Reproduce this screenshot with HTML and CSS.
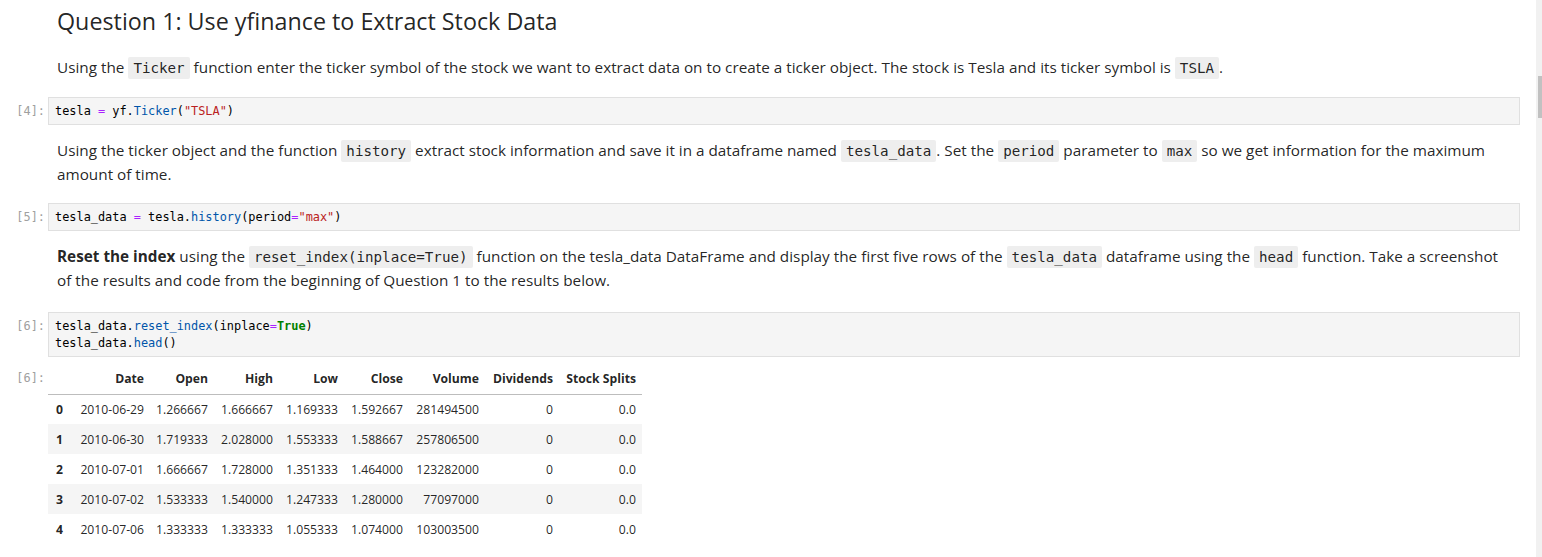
FILE: index.html
```html
<!DOCTYPE html>
<html lang="en">
<head>
<meta charset="utf-8">
<title>Question 1</title>
<link rel="stylesheet" href="styles.css">
</head>
<body>
<div class="app">
  <main class="notebook">
    <div class="cell title-cell">
      <div class="prompt"></div>
      <div class="md-body"><h2>Question 1: Use yfinance to Extract Stock Data</h2></div>
    </div>
    <div class="cell md md-1">
      <div class="prompt"></div>
      <div class="md-body"><p>Using the <code>Ticker</code> function enter the ticker symbol of the stock we want to extract data on to create a ticker object. The stock is Tesla and its ticker symbol is <code>TSLA</code>.</p></div>
    </div>
    <div class="cell code code-1">
      <div class="prompt">[4]:</div>
      <div class="editor"><pre>tesla <span class="o">=</span> yf.<span class="p">Ticker</span>(<span class="s">"TSLA"</span>)</pre></div>
    </div>
    <div class="cell md md-2">
      <div class="prompt"></div>
      <div class="md-body"><p>Using the ticker object and the function <code>history</code> extract stock information and save it in a dataframe named <code>tesla_data</code>. Set the <code>period</code> parameter to <code>max</code> so we get information for the maximum amount of time.</p></div>
    </div>
    <div class="cell code code-2">
      <div class="prompt">[5]:</div>
      <div class="editor"><pre>tesla_data <span class="o">=</span> tesla.<span class="p">history</span>(period<span class="o">=</span><span class="s">"max"</span>)</pre></div>
    </div>
    <div class="cell md md-3">
      <div class="prompt"></div>
      <div class="md-body"><p><strong>Reset the index</strong> using the <code>reset_index(inplace=True)</code> function on the tesla_data DataFrame and display the first five rows of the <code>tesla_data</code> dataframe using the <code>head</code> function. Take a screenshot of the results and code from the beginning of Question 1 to the results below.</p></div>
    </div>
    <div class="cell code code-3">
      <div class="prompt">[6]:</div>
      <div class="editor"><pre>tesla_data.<span class="p">reset_index</span>(inplace<span class="o">=</span><span class="k">True</span>)
tesla_data.<span class="p">head</span>()</pre></div>
    </div>
    <div class="cell output">
      <div class="prompt out-prompt">[6]:</div>
      <div class="out-body">
        <table class="df">
          <colgroup>
            <col class="c-idx"><col class="c-date"><col class="c-num"><col class="c-num2"><col class="c-num2"><col class="c-num2"><col class="c-vol"><col class="c-div"><col class="c-split">
          </colgroup>
          <thead>
            <tr><th></th><th>Date</th><th>Open</th><th>High</th><th>Low</th><th>Close</th><th>Volume</th><th>Dividends</th><th>Stock Splits</th></tr>
          </thead>
          <tbody>
            <tr><th>0</th><td>2010-06-29</td><td>1.266667</td><td>1.666667</td><td>1.169333</td><td>1.592667</td><td>281494500</td><td>0</td><td>0.0</td></tr>
            <tr><th>1</th><td>2010-06-30</td><td>1.719333</td><td>2.028000</td><td>1.553333</td><td>1.588667</td><td>257806500</td><td>0</td><td>0.0</td></tr>
            <tr><th>2</th><td>2010-07-01</td><td>1.666667</td><td>1.728000</td><td>1.351333</td><td>1.464000</td><td>123282000</td><td>0</td><td>0.0</td></tr>
            <tr><th>3</th><td>2010-07-02</td><td>1.533333</td><td>1.540000</td><td>1.247333</td><td>1.280000</td><td>77097000</td><td>0</td><td>0.0</td></tr>
            <tr><th>4</th><td>2010-07-06</td><td>1.333333</td><td>1.333333</td><td>1.055333</td><td>1.074000</td><td>103003500</td><td>0</td><td>0.0</td></tr>
          </tbody>
        </table>
      </div>
    </div>
  </main>
  <div class="scrollbar"><div class="thumb"></div></div>
</div>
</body>
</html>
```

FILE: styles.css
```css
* { box-sizing: border-box; }
html, body { margin: 0; padding: 0; background: #ffffff; }
body {
  font-family: "Open Sans", "Noto Sans", sans-serif;
  color: rgba(0, 0, 0, 0.87);
  height: 557px;
  overflow: hidden;
}
.app { display: flex; height: 557px; }
.notebook { flex: 1; min-width: 0; padding: 0 16px 0 0; }
.scrollbar { width: 6px; flex: none; background: #f1f1f1; }
.thumb { margin: 76px 0 0 2px; width: 4px; height: 42px; background: #c1c1c1; }

.cell { display: flex; align-items: flex-start; }
.prompt {
  width: 48px;
  flex: none;
  padding: 6px 3px 0 0;
  text-align: right;
  font-family: "DejaVu Sans Mono", "Liberation Mono", monospace;
  font-size: 11.9px;
  line-height: 17px;
  color: #a0a0a0;
}
.md-body { flex: 1; min-width: 0; padding: 0 14px 0 9px; font-size: 15.3px; line-height: 24px; }
.md-body p { margin: 0; }
.md-body strong { font-weight: 700; }
.md-body code {
  font-family: "DejaVu Sans Mono", "Liberation Mono", monospace;
  font-size: 14.2px;
  line-height: 1;
  background: #eeeeee;
  padding: 3px 5px;
  border-radius: 2px;
  color: rgba(0, 0, 0, 0.87);
}
h2 { margin: 0; padding-top: 8px; font-size: 23.3px; font-weight: 500; line-height: 26px; }

.md-1 { margin-top: 21px; }
.code-1 { margin-top: 18px; }
.md-2 { margin-top: 13px; }
.code-2 { margin-top: 17px; }
.md-3 { margin-top: 13px; }
.code-3 { margin-top: 20px; }
.output { margin-top: 7px; }

.editor {
  flex: 1;
  min-width: 0;
  border: 1px solid #e0e0e0;
  background: #f5f5f5;
  padding: 5px 6px 4px;
}
.editor pre {
  margin: 0;
  font-family: "DejaVu Sans Mono", "Liberation Mono", monospace;
  font-size: 11.9px;
  line-height: 17px;
  color: #000;
}
.o { color: #aa22ff; }
.p { color: #0055aa; }
.s { color: #ba2121; }
.k { color: #008000; font-weight: 700; }

.out-prompt { padding-top: 6px; }
.out-body { flex: 1; min-width: 0; }
.df {
  border-collapse: collapse;
  table-layout: fixed;
  width: 594px;
  font-size: 12.2px;
  line-height: 17px;
  color: rgba(0, 0, 0, 0.87);
}
.c-idx { width: 23px; }
.c-date { width: 79px; }
.c-num { width: 64px; }
.c-num2 { width: 65px; }
.c-vol { width: 76px; }
.c-div { width: 74px; }
.c-split { width: 83px; }
.df th, .df td { padding: 0 6px; text-align: right; white-space: nowrap; }
.df thead th {
  height: 30px;
  padding-top: 6px;
  vertical-align: top;
  font-weight: 700;
  border-bottom: 1px solid #bdbdbd;
}
.df tbody th, .df tbody td { height: 30px; }
.df tbody th { font-weight: 700; padding-right: 8px; padding-left: 2px; }
.df tbody tr:nth-child(even) { background: #f5f5f5; }
```
